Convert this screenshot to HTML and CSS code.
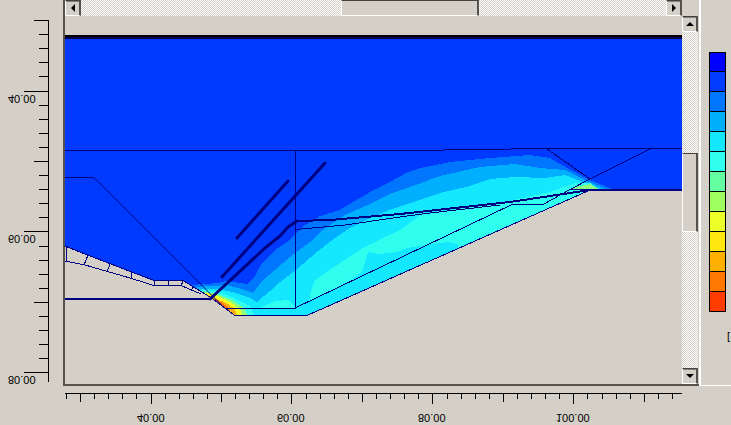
FILE: index.html
```html
<!DOCTYPE html>
<html lang="en">
<head>
<meta charset="utf-8">
<title>Contour plot</title>
<link rel="stylesheet" href="styles.css">
</head>
<body>
<main class="viewer">
  <svg class="axis-y" role="img" aria-label="Vertical ruler">
    <path class="tick" d="M34 20.5H48M39 34.5H48M39 48.5H48M39 62.5H48M39 76.5H48M24 91.5H48M39 105.5H48M39 119.5H48M39 133.5H48M39 147.5H48M34 161.5H48M39 175.5H48M39 189.5H48M39 203.5H48M39 217.5H48M24 231.5H48M39 246.5H48M39 260.5H48M39 274.5H48M39 288.5H48M34 302.5H48M39 316.5H48M39 330.5H48M39 344.5H48M39 358.5H48M24 372.5H48M48.5 20V382"/>
    <g class="mirrored">
      <text x="8" y="-95">40.00</text>
      <text x="8" y="-235">60.00</text>
      <text x="8" y="-376">80.00</text>
    </g>
  </svg>

  <section class="frame">
    <div class="scrollbar horizontal">
      <button class="arrow" type="button" aria-label="Scroll left"><svg viewBox="0 0 8 8"><path d="M6 0V8L2 4Z"/></svg></button>
      <div class="track"><div class="thumb"></div></div>
      <button class="arrow" type="button" aria-label="Scroll right"><svg viewBox="0 0 8 8"><path d="M2 0V8L6 4Z"/></svg></button>
    </div>
    <svg class="plot" viewBox="65 16 617 368" preserveAspectRatio="none" role="img" aria-label="Contours in cross section">
      <defs>
        <clipPath id="soil"><path d="M65 39H682V190H590L307 315H235L210 297L183 281H154L65 246Z"/></clipPath>
      </defs>
      <g clip-path="url(#soil)">
        <rect x="65" y="39" width="617" height="290" fill="#003aff"/>
        <path fill="#0076ff" d="M190 285L205 284 218 283 226 281 247 284 255 276 262 263 275 250 290 240 302 227 320 216 340 210 360 198 372 191 390 182 406 173 420 168 450 162 490 158 530 155 550 158 558 163 575 172 590 180 605 186 614 190 600 320H180Z"/>
        <path fill="#00b0ff" d="M194 288L204 286 215 286 227 285 238 288 253 293 262 281 275 270 290 257 310 242 320 232 345 215 370 204 390 194 410 187 440 176 480 167 515 164 540 168 565 170 585 180 608 190 600 320H180Z"/>
        <path fill="#14e8ff" d="M197 290L204 289 217 289 232 292 250 298 257 302 270 291 280 282 296 270 318 251 335 238 350 228 370 218 392 209 410 203 440 193 470 186 490 179 515 177 545 178 565 175 580 181 603 190 600 320H180Z"/>
        <path fill="#30fff0" d="M309 301L312 288 315 280 340 263 363 248 383 238 400 230 414 220 422 213 440 212 470 207 510 201 550 192 575 183 590 183 600 190 590 200 458 250 458 244 447 242 427 245 407 248 397 252 380 254 368 252 362 272 345 284Z"/>
        <path fill="#30fff0" d="M200 290L217 291 234 298 250 306 254 315H225ZM260 308L275 301 288 300 296 308Z"/>
        <path fill="#8cff80" d="M200 291L217 294 232 300 244 308 248 316H225ZM570 188L590 184 600 190H572Z"/>
        <path fill="#f4ff20" d="M202 292L216 295 230 302 240 309 243 316H230Z"/>
        <path fill="#ffb010" d="M206 294L215 298 228 304 235 309 237 316H230Z"/>
        <path fill="#ff6a10" d="M212 298L221 302 229 308 230 312Z"/>
      </g>
      <rect x="65" y="35" width="617" height="4" fill="#000048"/>
      <rect x="65" y="35" width="617" height="2" fill="#000"/>
      <g class="thin">
        <path d="M65 150.5H410L545 148.5H682"/>
        <path d="M65 177.5H94M225 308.5H295.5V150"/>
        <path class="smooth" d="M94 177.5L225 308.5"/>
        <path d="M295 308L512 204.5H543L570 189.5 590 179 650 149M547 149L590 179M570 189.5H592"/>
        <path d="M296 229.5L345 225 400 217 430 213 500 205"/>
        <path d="M65 246L90 256 154 280.5H183L210 297 235 315.5H307L590 190"/>
        <path d="M65 261L85 265 130 278 154 285.5H181L201 294M66.500 247V261M88 255L84 265M110 264L107 272M131.500 272V278M154.500 280V286M168.500 280V286M183 281L181 286M193 287L191 291"/>
      </g>
      <g class="thick">
        <path d="M65 299H210M297 221L330 220 400 214 510 202 590 190H682"/>
        <path class="heavy" d="M210 299L265 248 280 236 288 227 297 221M222 277L325 163M237 238L288 181"/>
      </g>
    </svg>
    <div class="scrollbar vertical">
      <button class="arrow" type="button" aria-label="Scroll up"><svg viewBox="0 0 8 8"><path d="M0 6H8L4 2Z"/></svg></button>
      <div class="track"><div class="thumb"></div></div>
      <button class="arrow" type="button" aria-label="Scroll down"><svg viewBox="0 0 8 8"><path d="M0 2H8L4 6Z"/></svg></button>
    </div>
  </section>

  <aside class="legend">
    <ul class="swatches">
      <li class="c1"></li><li class="c2"></li><li class="c3"></li><li class="c4"></li><li class="c5"></li><li class="c6"></li><li class="c7"></li><li class="c8"></li><li class="c9"></li><li class="c10"></li><li class="c11"></li><li class="c12"></li><li class="c13"></li>
    </ul>
    <p class="unit">[</p>
  </aside>

  <svg class="axis-x" role="img" aria-label="Horizontal ruler">
    <path class="tick" d="M2 7.500H619M3.500 7V13M17.500 7V16M31.500 7V13M45.500 7V13M59.500 7V13M73.500 7V13M88.500 7V18M102.500 7V13M116.500 7V13M130.500 7V13M144.500 7V13M158.500 7V16M172.500 7V13M186.500 7V13M200.500 7V13M214.500 7V13M228.500 7V18M243.500 7V13M257.500 7V13M271.500 7V13M285.500 7V13M299.500 7V16M313.500 7V13M327.500 7V13M341.500 7V13M355.500 7V13M369.500 7V18M384.500 7V13M398.500 7V13M412.500 7V13M426.500 7V13M440.500 7V16M454.500 7V13M468.500 7V13M482.500 7V13M496.500 7V13M510.500 7V18M524.500 7V13M539.500 7V13M553.500 7V13M567.500 7V13M581.500 7V16M595.500 7V13M609.500 7V13"/>
    <g class="mirrored">
      <text x="74" y="-28">40.00</text>
      <text x="214" y="-28">60.00</text>
      <text x="355" y="-28">80.00</text>
      <text x="493" y="-28">100.00</text>
    </g>
  </svg>
</main>
</body>
</html>
```
FILE: styles.css
```css
* { box-sizing: border-box; }

body {
  margin: 0;
  background: #d4d0c8;
  color: #000;
  font: 11px/14px "Liberation Sans", Arial, sans-serif;
}

.viewer {
  display: grid;
  grid-template-columns: 63px 1fr 32px;
  grid-template-rows: 1fr 39px;
  height: 100vh;
  overflow: hidden;
}

svg { display: block; }

.axis-y,
.axis-x {
  width: 100%;
  height: 100%;
  overflow: hidden;
}

.axis-x { grid-column: 2 / 4; }

.tick {
  fill: none;
  stroke: #000;
  shape-rendering: crispEdges;
}

.mirrored { transform: scaleY(-1); }

.frame {
  display: grid;
  grid-template-columns: 1fr 17px;
  grid-template-rows: 16px 1fr;
  min-width: 0;
  min-height: 0;
  border-left: 2px solid #55524d;
  border-bottom: 2px solid #55524d;
}

.plot {
  grid-area: 2 / 1;
  width: 100%;
  height: 100%;
  min-height: 0;
  shape-rendering: crispEdges;
}

.thin,
.thick {
  fill: none;
  stroke: #000080;
}

.smooth { shape-rendering: geometricPrecision; }

.thick {
  stroke-width: 2px;
  stroke-linejoin: round;
}

.heavy {
  stroke-width: 3px;
  stroke-linecap: round;
  shape-rendering: geometricPrecision;
}

.scrollbar { display: flex; }

.horizontal { grid-area: 1 / 1; }

.vertical {
  grid-area: 2 / 2;
  flex-direction: column;
  width: 16px;
  min-height: 0;
}

.track {
  display: flex;
  flex: 1;
  background: repeating-conic-gradient(#fff 0 25%, #d4d0c8 0 50%) 0 0 / 2px 2px;
}

.vertical .track { flex-direction: column; }

.arrow,
.thumb {
  background: #d4d0c8;
  border: solid;
  border-width: 1px 2px 1px 1px;
  border-color: #45423e #55524d #fff #fff;
}

.arrow {
  display: grid;
  place-items: center;
  flex: none;
  width: 16px;
  height: 16px;
  padding: 0;
  box-shadow: inset 0 1px #808080;
}

.arrow svg {
  width: 8px;
  height: 8px;
}

.horizontal .thumb {
  width: 23.5%;
  margin-left: 44.5%;
}

.vertical .thumb {
  height: 23.5%;
  margin-top: 121px;
}

.legend {
  border-left: 2px solid #fff;
  border-bottom: 1px solid #fff;
  padding: 52px 0 0 8px;
  overflow: hidden;
}

.swatches {
  width: 17px;
  margin: 0;
  padding: 0;
  list-style: none;
  border: 1px solid #000;
  border-top: 0;
}

.swatches li {
  height: 20px;
  border-top: 1px solid #000;
}

.swatches .c1 { height: 19px; }

.c1 { background: #0000ff; }
.c2 { background: #003cff; }
.c3 { background: #0076ff; }
.c4 { background: #00b0ff; }
.c5 { background: #14e8ff; }
.c6 { background: #30fff0; }
.c7 { background: #64ffa0; }
.c8 { background: #a0ff60; }
.c9 { background: #ecff28; }
.c10 { background: #ffe810; }
.c11 { background: #ffb000; }
.c12 { background: #ff7800; }
.c13 { background: #ff3c00; }

.unit {
  margin: 17px 0 0 18px;
}
```
